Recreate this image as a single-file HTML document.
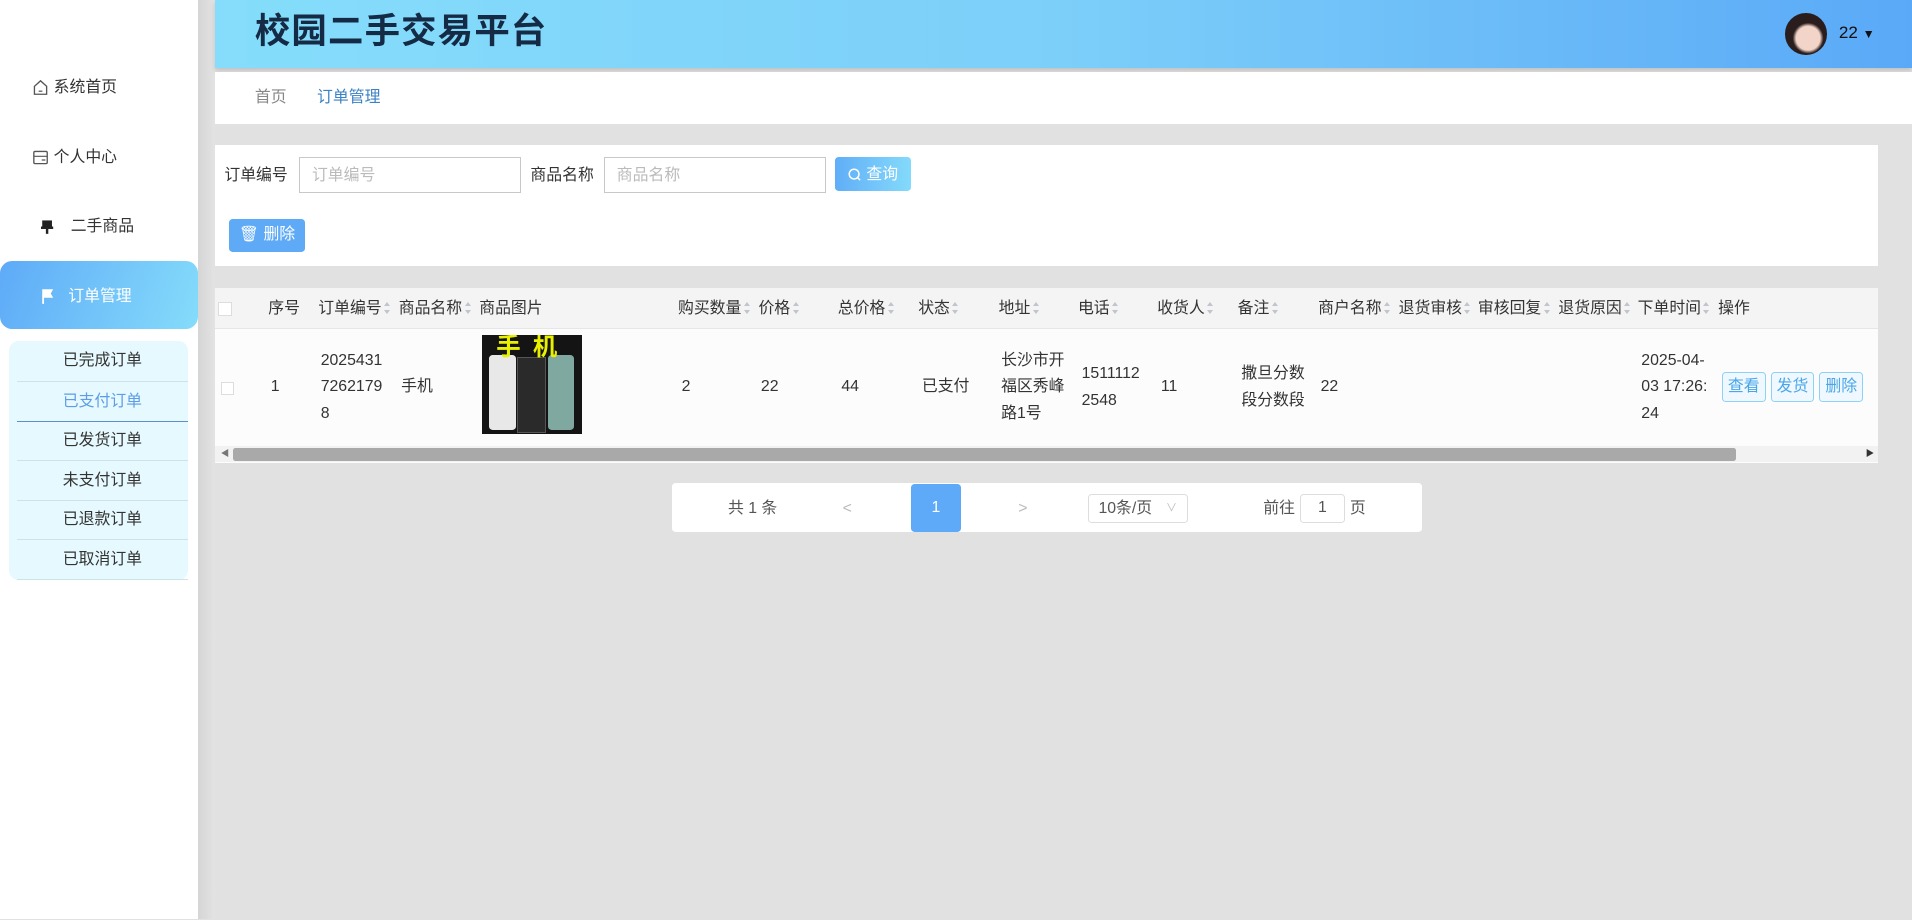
<!DOCTYPE html>
<html><head><meta charset="utf-8"><style>
html{zoom:1.219388}
*{box-sizing:border-box;margin:0;padding:0}
body{width:1568px;height:754px;position:relative;overflow:hidden;background:#e1e1e1;font-family:"Liberation Sans","Noto Sans CJK SC",sans-serif;font-size:13px;color:#333;line-height:1.2}
.a{position:absolute}
.side{left:0;top:0;width:162px;height:754px;background:#fff}
.shadow{left:162px;top:0;width:14px;height:754px;background:linear-gradient(90deg,#d5d5d5,#e3e3e3)}
.mi{left:26px;font-size:13px;color:#333;display:flex;align-items:center;gap:4px}
.hdr{left:176px;top:0;width:1392px;height:56px;background:linear-gradient(90deg,#85ddfb,#7ccff9 50%,#5aa9f8);box-shadow:0 2px 4px rgba(0,0,0,.15)}
.card{background:#fff}
.th{top:245px;font-size:13px;color:#333;white-space:nowrap}
.td{font-size:13px;color:#333;line-height:22px}
.sort{display:inline-block;width:6px;height:10px;vertical-align:middle;margin-left:2px;position:relative}
.sort:before{content:"";position:absolute;left:0;top:0;border:3px solid transparent;border-bottom:4px solid #c0c4cc;border-top:0}
.sort:after{content:"";position:absolute;left:0;top:6px;border:3px solid transparent;border-top:4px solid #c0c4cc;border-bottom:0}
.ob{border:1px solid #8fd0f5;border-radius:3px;color:#4aa6e8;font-size:13px;width:36px;height:25px;line-height:23px;text-align:center;background:#eef8fe}
.sub{left:14px;width:140px;height:33px;line-height:32px;text-align:center;border-bottom:1px solid #cfe2ea;font-size:13px;color:#333}
</style></head><body>
<div class="a side"></div>
<div class="a shadow"></div>
<div class="a mi" style="top:64px"><svg width="14" height="14" viewBox="0 0 14 14"><path d="M2 6L7 1.5 12 6V12.5H2Z" fill="none" stroke="#555" stroke-width="1.1"/><path d="M5.5 10h3" stroke="#555"/></svg>系统首页</div>
<div class="a mi" style="top:121px"><svg width="14" height="14" viewBox="0 0 14 14"><rect x="1.5" y="2" width="11" height="10" rx="1" fill="none" stroke="#555" stroke-width="1.1"/><path d="M1.5 6h11M8 9h3" stroke="#555"/></svg>个人中心</div>
<div class="a mi" style="top:178px;left:34px"><svg width="10" height="14" viewBox="0 0 10 14"><rect x="1" y="2" width="8" height="6" fill="#222"/><rect x="0" y="7" width="10" height="2" fill="#222"/><rect x="4" y="9" width="2" height="4" fill="#222"/></svg><span style="margin-left:10px">二手商品</span></div>
<div class="a" style="left:0;top:214px;width:162px;height:56px;border-radius:10px;background:linear-gradient(110deg,#5eaaf8,#85dcfa)"></div>
<div class="a" style="left:34px;top:235px;color:#fff;font-size:13px;display:flex;align-items:center"><svg width="12" height="14" viewBox="0 0 12 14"><path d="M1 1h9l-2 3.5 2 3.5H2.5V13H1Z" fill="#fff"/></svg><span style="margin-left:10px">订单管理</span></div>
<div class="a" style="left:7px;top:280px;width:147px;height:196px;background:#e6f9fe;border-radius:8px"></div>
<div class="a sub" style="top:280px">已完成订单</div>
<div class="a sub" style="top:313px;color:#5d9ce6;border-bottom-color:#5d8fd0">已支付订单</div>
<div class="a sub" style="top:345px">已发货订单</div>
<div class="a sub" style="top:378px">未支付订单</div>
<div class="a sub" style="top:410px">已退款订单</div>
<div class="a sub" style="top:443px">已取消订单</div>

<div class="a hdr"></div>
<div class="a" style="left:209px;top:9px;font-size:29px;font-weight:bold;color:#152a45;letter-spacing:1px">校园二手交易平台</div>
<div class="a" style="left:1464px;top:11px;width:34px;height:34px;border-radius:50%;background:radial-gradient(circle at 55% 60%,#f2d4c8 0 35%,#2a1d1d 45%)"></div>
<div class="a" style="left:1508px;top:19px;font-size:14px;color:#111">22 <span style="font-size:10px">▼</span></div>

<div class="a card" style="left:176px;top:59px;width:1392px;height:43px"></div>
<div class="a" style="left:209px;top:72px;font-size:13px;color:#888">首页</div>
<div class="a" style="left:260px;top:72px;font-size:13px;color:#3a82c4">订单管理</div>

<div class="a card" style="left:176px;top:119px;width:1364px;height:99px"></div>
<div class="a" style="left:184px;top:136px">订单编号</div>
<div class="a" style="left:245px;top:129px;width:182px;height:29px;border:1px solid #c8c8c8;padding:6px 10px;color:#bbb">订单编号</div>
<div class="a" style="left:435px;top:136px">商品名称</div>
<div class="a" style="left:495px;top:129px;width:182px;height:29px;border:1px solid #c8c8c8;padding:6px 10px;color:#bbb">商品名称</div>
<div class="a" style="left:685px;top:129px;width:62px;height:28px;border-radius:3px;background:linear-gradient(90deg,#60aef8,#84dafb);color:#fff;display:flex;align-items:center;justify-content:center;gap:4px"><svg width="11" height="11" viewBox="0 0 11 11"><circle cx="5" cy="5" r="4" fill="none" stroke="#fff" stroke-width="1.2"/><path d="M8 8l2 2" stroke="#fff" stroke-width="1.2"/></svg>查询</div>
<div class="a" style="left:188px;top:180px;width:62px;height:27px;border-radius:3px;background:#5eaaf7;color:#fff;line-height:27px;text-align:center">🗑 删除</div>

<div class="a card" style="left:176px;top:236px;width:1364px;height:144px;background:#fcfcfc"></div>
<div class="a" style="left:176px;top:236px;width:1364px;height:34px;background:#f4f4f4;border-bottom:1px solid #e6e6e6"></div>
<div class="a" style="left:179px;top:248px;width:11px;height:11px;border:1px solid #ddd;background:#fff"></div>
<div class="a th" style="left:220px">序号</div>
<div class="a th" style="left:261px">订单编号<i class="sort"></i></div>
<div class="a th" style="left:327px">商品名称<i class="sort"></i></div>
<div class="a th" style="left:393px">商品图片</div>
<div class="a th" style="left:556px">购买数量<i class="sort"></i></div>
<div class="a th" style="left:622px">价格<i class="sort"></i></div>
<div class="a th" style="left:687px">总价格<i class="sort"></i></div>
<div class="a th" style="left:753px">状态<i class="sort"></i></div>
<div class="a th" style="left:819px">地址<i class="sort"></i></div>
<div class="a th" style="left:884px">电话<i class="sort"></i></div>
<div class="a th" style="left:949px">收货人<i class="sort"></i></div>
<div class="a th" style="left:1015px">备注<i class="sort"></i></div>
<div class="a th" style="left:1081px">商户名称<i class="sort"></i></div>
<div class="a th" style="left:1147px">退货审核<i class="sort"></i></div>
<div class="a th" style="left:1212px">审核回复<i class="sort"></i></div>
<div class="a th" style="left:1278px">退货原因<i class="sort"></i></div>
<div class="a th" style="left:1343px">下单时间<i class="sort"></i></div>
<div class="a th" style="left:1409px">操作</div>

<div class="a" style="left:181px;top:313px;width:11px;height:11px;border:1px solid #ddd;background:#fff"></div>
<div class="a td" style="left:222px;top:307px">1</div>
<div class="a td" style="left:263px;top:285px">2025431<br>7262179<br>8</div>
<div class="a td" style="left:329px;top:307px">手机</div>
<div class="a" style="left:395px;top:275px;width:82px;height:81px;background:#141414;overflow:hidden">
<div class="a" style="left:6px;top:16px;width:22px;height:62px;background:#e8e8e8;border-radius:3px"></div>
<div class="a" style="left:29px;top:18px;width:24px;height:62px;background:#2a2a2a;border:1px solid #555"></div>
<div class="a" style="left:54px;top:16px;width:22px;height:62px;background:#7fa8a0;border-radius:3px"></div>
<div class="a" style="left:12px;top:-2px;font-size:20px;font-weight:bold;color:#e8f000;letter-spacing:10px">手机</div></div>
<div class="a td" style="left:559px;top:307px">2</div>
<div class="a td" style="left:624px;top:307px">22</div>
<div class="a td" style="left:690px;top:307px">44</div>
<div class="a td" style="left:756px;top:307px">已支付</div>
<div class="a td" style="left:821px;top:285px">长沙市开<br>福区秀峰<br>路1号</div>
<div class="a td" style="left:887px;top:296px">1511112<br>2548</div>
<div class="a td" style="left:952px;top:307px">11</div>
<div class="a td" style="left:1018px;top:296px">撒旦分数<br>段分数段</div>
<div class="a td" style="left:1083px;top:307px">22</div>
<div class="a td" style="left:1346px;top:285px">2025-04-<br>03 17:26:<br>24</div>
<div class="a ob" style="left:1412px;top:305px">查看</div>
<div class="a ob" style="left:1452px;top:305px">发货</div>
<div class="a ob" style="left:1492px;top:305px">删除</div>
<div class="a" style="left:176px;top:366px;width:1364px;height:13px;background:#f2f2f2"></div>
<div class="a" style="left:191px;top:367px;width:1233px;height:11px;background:#a9a9a9;border-radius:2px"></div>
<div class="a" style="left:181px;top:367px;font-size:7px;color:#777">◀</div>
<div class="a" style="left:1530px;top:367px;font-size:7px;color:#333">▶</div>

<div class="a card" style="left:551px;top:396px;width:615px;height:40px;border-radius:3px"></div>
<div class="a" style="left:597px;top:409px;color:#555">共 1 条</div>
<div class="a" style="left:691px;top:409px;color:#bbb">&lt;</div>
<div class="a" style="left:747px;top:397px;width:41px;height:39px;background:#5eaaf8;color:#fff;text-align:center;line-height:39px;border-radius:3px">1</div>
<div class="a" style="left:835px;top:409px;color:#bbb">&gt;</div>
<div class="a" style="left:892px;top:405px;width:82px;height:24px;border:1px solid #ddd;border-radius:3px;padding:0 8px;color:#555;white-space:nowrap;display:flex;align-items:center;justify-content:space-between"><span>10条/页</span><span style="color:#bbb;font-size:9px">∨</span></div>
<div class="a" style="left:1036px;top:409px;color:#555">前往</div>
<div class="a" style="left:1066px;top:405px;width:37px;height:24px;border:1px solid #ddd;border-radius:3px;text-align:center;line-height:22px;color:#555">1</div>
<div class="a" style="left:1107px;top:409px;color:#555">页</div>
</body></html>
